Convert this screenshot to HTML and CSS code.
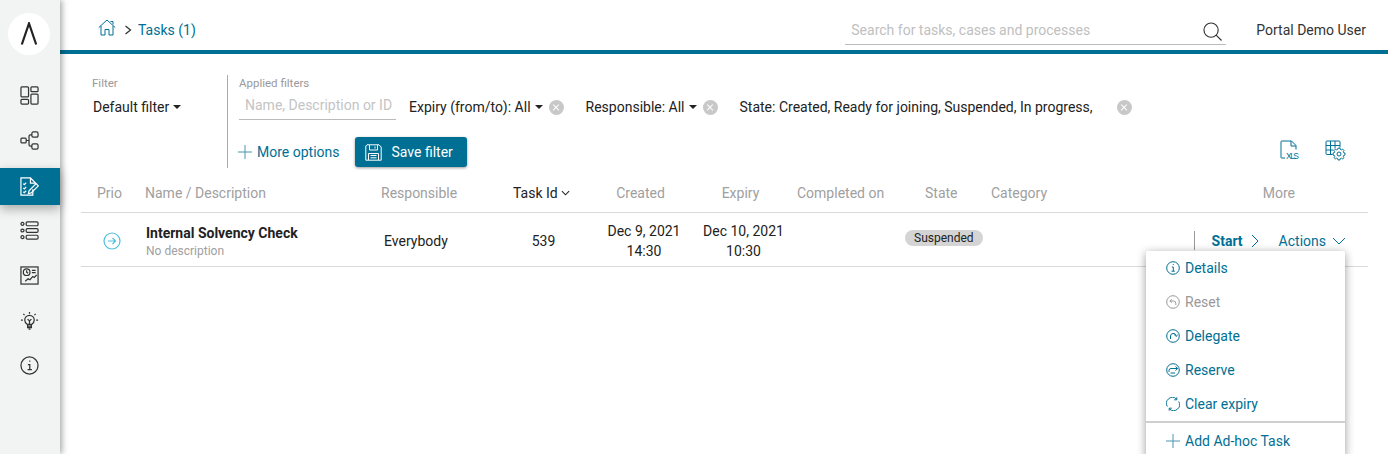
FILE: index.html
```html
<!DOCTYPE html>
<html lang="en">
<head>
<meta charset="utf-8">
<title>Tasks</title>
<link rel="stylesheet" href="styles.css">
</head>
<body>
<div class="app">
  <nav class="sidebar">
    <div class="logo"><svg width="20" height="24" viewBox="0 0 20 24"><path d="M2.800 22.500 10 1.500 17.200 22.500" fill="none" stroke="#222" stroke-width="2.200"/></svg></div>
    <a class="nav-item first"><svg class="nav-icon" viewBox="0 0 20 20"><rect x="1" y="1" width="8" height="10.500" rx="1"/><rect x="1" y="14" width="8" height="5" rx="1"/><rect x="11.500" y="1" width="7.500" height="5" rx="1"/><rect x="11.500" y="8.500" width="7.500" height="10.500" rx="1"/></svg></a>
    <a class="nav-item"><svg class="nav-icon" viewBox="0 0 20 20"><rect x="1" y="7.500" width="5.500" height="5" rx="1"/><rect x="12.500" y="1" width="6.500" height="5.500" rx="1.500"/><rect x="12.500" y="13.500" width="6.500" height="5.500" rx="1.500"/><path d="M6.500 10H9.500M12.500 4H11Q9.500 4 9.500 5.500V14.500Q9.500 16 11 16H12.500"/></svg></a>
    <a class="nav-item active"><svg class="nav-icon" viewBox="0 0 20 20"><path d="M13.500 13v6H1V1H11L16.500 6.500V8M11 1V6.500H16.500"/><path d="M3.500 7l1 1 2-2M3.500 11.500l1 1 2-2M3.500 15.500l1 1 2-2M9.500 14.500l-.7 3 3-.7 7.500-7.500-2.300-2.300Z"/></svg></a>
    <a class="nav-item"><svg class="nav-icon" viewBox="0 0 20 20"><rect x="1" y="1.500" width="3.200" height="3" rx="1.500"/><rect x="1" y="8.500" width="3.200" height="3" rx="1.500"/><rect x="1" y="15.500" width="3.200" height="3" rx="1.500"/><rect x="6.500" y="1" width="12.500" height="4" rx="1.200"/><rect x="6.500" y="8" width="12.500" height="4" rx="1.200"/><rect x="6.500" y="15" width="12.500" height="4" rx="1.200"/></svg></a>
    <a class="nav-item"><svg class="nav-icon" viewBox="0 0 20 20"><rect x="1" y="1" width="18" height="18"/><circle cx="7" cy="6.500" r="3.500"/><path d="M7 4.500v2l1.500 1M12.500 4.500h4M12.500 7h4M5.500 16l3-2.500 2 1 3-3.500 1.500 1 2.500-2.500"/></svg></a>
    <a class="nav-item"><svg class="nav-icon" viewBox="0 0 20 20"><path d="M7.500 14C6 13 5 11.300 5 9.500a5 5 0 0 1 10 0c0 1.800-1 3.500-2.500 4.500Z"/><path d="M8 14v3.500h4V14M8.500 16h3M8 8.500l2 2 2-2M10 10.500v3.500M10 1v2M3.500 3l1.300 1.300M16.500 3l-1.300 1.300M1 9.500h2M17 9.500h2M9 19h2"/></svg></a>
    <a class="nav-item"><svg class="nav-icon" viewBox="0 0 20 20"><circle cx="10" cy="10" r="9"/><path d="M8.300 9h2v5M8 14.300h4.500M9.700 5.500h1.200"/></svg></a>
  </nav>

  <main class="main">
    <header class="topbar">
      <div class="crumbs">
        <svg class="home" viewBox="0 0 18 18"><path d="M.8 8.500 9 1l8.200 7.500M3 7V16H7V10.500H11V16H15V7M12.500 2.500 15 2.500V5.500"/></svg>
        <svg class="crumb-sep" viewBox="0 0 8 10"><path d="M1.500 1 6.500 5 1.500 9"/></svg>
        <a class="crumb-link">Tasks (1)</a>
      </div>
      <div class="top-right">
        <div class="search">
          <span class="search-text">Search for tasks, cases and processes</span>
          <svg class="search-icon" viewBox="0 0 20 20"><circle cx="8.500" cy="8.500" r="7.500"/><path d="M13.800 13.800 19.500 19.500"/></svg>
        </div>
        <span class="user">Portal Demo User</span>
      </div>
    </header>

    <section class="filters">
      <div class="filter-col">
        <div class="label">Filter</div>
        <div class="drop default-filter">Default filter<i class="caret"></i></div>
      </div>
      <div class="applied">
        <div class="label">Applied filters</div>
        <div class="applied-row">
          <div class="name-input">Name, Description or ID</div>
          <div class="drop expiry">Expiry (from/to): All<i class="caret"></i></div>
          <i class="clear"></i>
          <div class="drop resp">Responsible: All<i class="caret"></i></div>
          <i class="clear"></i>
          <div class="drop state-filter">State: Created, Ready for joining, Suspended, In progress,</div>
          <i class="clear"></i>
        </div>
        <div class="applied-actions">
          <a class="more-options"><svg class="plus" viewBox="0 0 14 14"><path d="M7 0V14M0 7H14"/></svg>More options</a>
          <button class="save"><svg class="save-icon" viewBox="0 0 17 17"><path d="M.8 2 2 .8H14L16.200 3V16.200H.8ZM4.500 1V6H12.500V1M10 2.500V4.500M3.500 16V9.500H13.500V16M5.500 11.500H11.500M5.500 13.800H11.500"/></svg>Save filter</button>
        </div>
      </div>
      <div class="tools">
        <svg class="tool" viewBox="0 0 20 20"><path d="M5 18H1.500Q1 18 1 17.500V1.500Q1 1 1.500 1H11.500L16 5.500V9.500M11 1V6H16"/><text x="6" y="18.500" class="xls" textLength="13">XLS</text></svg>
        <svg class="tool" viewBox="0 0 20 20"><path d="M7.500 14.500H2Q1 14.500 1 13.500V2Q1 1 2 1H14Q15 1 15 2V7.500M1 5.500H15M1 10H8.500M5.500 1V14.500M10 1V8.500"/><circle cx="14" cy="14" r="2"/><path d="M13.500 9.500h2l.3 1.300 1.200.5 1.200-.7 1.300 1.400-.7 1.100.5 1.200 1.200.3v1.800l-1.200.3-.5 1.200.7 1.100-1.300 1.300-1.200-.7-1.200.5-.3 1.300h-2l-.3-1.300-1.200-.5-1.100.7-1.400-1.300.7-1.100-.5-1.200-1.200-.3v-1.800l1.200-.3.5-1.200-.7-1.100 1.400-1.400 1.100.7 1.200-.5Z" transform="translate(-.5 -1.450)"/></svg>
      </div>
    </section>

    <section class="table">
      <div class="thead">
        <span class="th th-prio">Prio</span>
        <span class="th">Name / Description</span>
        <span class="th">Responsible</span>
        <span class="th th-sort">Task Id<svg class="sort" viewBox="0 0 10 6"><path d="M1 1 5 5 9 1"/></svg></span>
        <span class="th th-created">Created</span>
        <span class="th th-expiry">Expiry</span>
        <span class="th">Completed on</span>
        <span class="th th-state">State</span>
        <span class="th">Category</span>
        <span class="th th-more">More</span>
      </div>
      <div class="trow">
        <span class="td-prio"><svg class="prio" viewBox="0 0 18 18"><circle cx="9" cy="9" r="8"/><path d="M5 9H12.500M9.500 6 12.500 9 9.500 12"/></svg></span>
        <span class="td-name"><b class="task-name">Internal Solvency Check</b><small class="task-desc">No description</small></span>
        <span class="td-resp">Everybody</span>
        <span class="td-id">539</span>
        <span class="td-date">Dec 9, 2021<br>14:30</span>
        <span class="td-date">Dec 10, 2021<br>10:30</span>
        <span></span>
        <span class="td-state"><em class="badge">Suspended</em></span>
        <span></span>
        <span class="td-actions">
          <a class="start">Start<svg class="chev-r" viewBox="0 0 8 14"><path d="M1 1 7 7 1 13"/></svg></a>
          <a class="actions">Actions<svg class="chev-d" viewBox="0 0 14 8"><path d="M1 1 7 7 13 1"/></svg></a>
        </span>
      </div>
    </section>

    <ul class="menu">
      <li class="menu-item"><svg class="mi" viewBox="0 0 14 14"><circle cx="7" cy="7" r="6.300"/><path d="M5.800 6H7.300V10M5.500 10.200H8.800M6.800 3.400H7.800"/></svg>Details</li>
      <li class="menu-item off"><svg class="mi" viewBox="0 0 14 14"><circle cx="7" cy="7" r="6.300"/><path d="M5.800 4.300 3.800 6 5.800 7.700M4 6H7.500A2.300 2.300 0 0 1 9.800 8.300V10"/></svg>Reset</li>
      <li class="menu-item"><svg class="mi" viewBox="0 0 14 14"><circle cx="7" cy="7" r="6.300"/><path d="M4.500 10V7A2.800 2.800 0 0 1 10 6.500M8.300 5.500 10 7.500 11.800 5.800"/></svg>Delegate</li>
      <li class="menu-item"><svg class="mi" viewBox="0 0 14 14"><circle cx="7" cy="7" r="6.300"/><path d="M3 9V7.500Q3 5.500 5 5.500H11.500M9.500 3.500 11.700 5.500 9.500 7.500M4.500 10H9"/></svg>Reserve</li>
      <li class="menu-item"><svg class="mi" viewBox="0 0 14 14"><path d="M1.300 9.500A6 6 0 0 1 10.500 2M12.700 4.500A6 6 0 0 1 3.500 12M10.800 .3V2.800H8.200M3.200 13.700V11.200H5.800"/></svg>Clear expiry</li>
      <li class="menu-item add"><svg class="mi-plus" viewBox="0 0 14 14"><path d="M7 0V14M0 7H14"/></svg>Add Ad-hoc Task</li>
    </ul>
  </main>
</div>
</body>
</html>
```
FILE: styles.css
```css
* { box-sizing: border-box; }
html, body { margin: 0; height: 100%; overflow: hidden; }
body { font-family: Roboto, "Liberation Sans", sans-serif; font-size: 14px; color: #222; background: #fff; }
svg { fill: none; stroke-width: 1; flex: none; display: block; }

.app { display: flex; height: 454px; }

/* Sidebar */
.sidebar { width: 60px; flex: none; background: #f2f4f4; box-shadow: 2px 0 6px rgba(0,0,0,.35); display: flex; flex-direction: column; align-items: stretch; position: relative; z-index: 2; padding-top: 13px; }
.logo { width: 42px; height: 42px; border-radius: 50%; background: #fff; margin: 0 0 0 8px; display: flex; align-items: center; justify-content: center; }
.nav-item { height: 37px; display: flex; align-items: center; justify-content: center; margin-bottom: 8px; }
.nav-item.first { margin-top: 22px; }
.nav-icon { width: 19px; height: 19px; stroke: #333; stroke-width: 1.300; margin-left: -2px; }
.nav-item.active { background: #006f94; box-shadow: 0 4px 10px rgba(0,0,0,.3); margin-top: 1px; margin-bottom: 7px; }
.nav-item.active .nav-icon { stroke: #fff; }

/* Top bar */
.main { flex: 1; min-width: 0; position: relative; }
.topbar { height: 54px; border-bottom: 4px solid #006f94; display: flex; justify-content: space-between; align-items: center; padding: 10px 22px 0 38px; }
.crumbs { display: flex; align-items: center; }
.home { width: 18px; height: 18px; stroke: #006f94; margin-top: -4px; }
.crumb-sep { width: 8px; height: 10px; stroke: #333; stroke-width: 1.300; margin: 0 6px 0 8px; }
.crumb-link { color: #006f94; font-size: 14px; }
.top-right { display: flex; align-items: center; }
.search { width: 381px; height: 30px; border-bottom: 1px solid #bbb; display: flex; align-items: center; justify-content: space-between; padding: 0 4px 0 6px; }
.search-text { color: #c0c0c0; font-size: 14px; }
.search-icon { width: 19px; height: 19px; stroke: #333; stroke-width: 1.200; margin-top: 4px; }
.user { margin-left: 30px; color: #333; font-size: 14px; }

/* Filters */
.filters { display: flex; height: 126px; padding: 21px 24px 0 32px; position: relative; }
.filter-col { width: 135px; flex: none; }
.label { font-size: 11.500px; color: #999; line-height: 16px; }
.drop { font-size: 14px; color: #222; white-space: nowrap; display: flex; align-items: center; }
.default-filter { margin-top: 7px; margin-left: 1px; line-height: 18px; }
.caret { width: 0; height: 0; border: 4px solid transparent; border-top-color: #222; border-bottom: 0; margin-left: 4px; }
.applied { flex: 1; border-left: 1px solid #aaa; padding-left: 11px; height: 93px; }
.applied-row { display: flex; align-items: center; margin-top: 3px; height: 26px; }
.name-input { width: 157px; height: 26px; border-bottom: 1px solid #bbb; color: #c4c4c4; font-size: 14px; line-height: 22px; padding-left: 6px; white-space: nowrap; flex: none; }
.expiry { margin-left: 13px; }
.resp { margin-left: 22px; }
.state-filter { margin-left: 22px; width: 371px; flex: none; }
.clear { width: 15px; height: 15px; border-radius: 50%; background: #c8c8c8; margin-left: 6px; flex: none; position: relative; }
.clear::before, .clear::after { content: ""; position: absolute; left: 3.500px; top: 7px; width: 8px; height: 1.300px; background: #fff; transform: rotate(45deg); }
.clear::after { transform: rotate(-45deg); }
.applied-actions { display: flex; align-items: center; margin-top: 17px; margin-left: -1px; }
.more-options { display: flex; align-items: center; color: #006f94; font-size: 14px; white-space: nowrap; }
.plus { width: 14px; height: 14px; stroke: #4b96b0; margin-right: 5px; }
.save { margin-left: 15px; width: 112px; height: 30px; background: #006f94; color: #fff; border: 0; border-radius: 3px; box-shadow: 0 1px 3px rgba(0,0,0,.4); font: 14px Roboto, sans-serif; display: flex; align-items: center; padding: 0 0 0 10px; }
.save-icon { width: 17px; height: 17px; stroke: #fff; margin-right: 10px; }
.tools { position: absolute; right: 43px; top: 86px; display: flex; gap: 25px; }
.tool { width: 20px; height: 20px; stroke: #006f94; overflow: visible; }
.xls { font: 8.500px "Liberation Sans", sans-serif; fill: #006f94; stroke: none; }

/* Table */
.table { margin: 0 20px 0 21px; }
.thead, .trow { display: grid; grid-template-columns: 64px 236px 119px 95px 104px 98px 111px 83px 182px 1fr; align-items: center; }
.thead { height: 33px; border-bottom: 1px solid #d9d9d9; }
.th { color: #a0a0a0; font-size: 14px; white-space: nowrap; padding-bottom: 6px; }
.th-prio { padding-left: 16px; }
.th-sort { color: #222; display: flex; align-items: center; padding-left: 13px; }
.sort { width: 9px; height: 6px; stroke: #222; stroke-width: 1.200; margin-left: 3px; }
.th-created { text-align: center; padding-right: 13px; }
.th-expiry { text-align: center; padding-right: 15px; }
.th-state { padding-left: 17px; }
.th-more { text-align: right; padding-right: 73px; margin-left: -130px; }
.trow { height: 54px; padding-top: 2px; border-bottom: 1px solid #d9d9d9; }
.td-prio { padding-left: 22px; }
.prio { width: 18px; height: 18px; stroke: #4fbfdf; stroke-width: 1.200; }
.td-name { display: flex; flex-direction: column; gap: 1px; padding-left: 1px; margin-top: 2px; }
.task-name { font-size: 14px; font-weight: 700; color: #222; line-height: 18px; }
.task-desc { font-size: 12px; color: #a0a0a0; line-height: 16px; }
.td-resp { padding-left: 3px; }
.td-id { text-align: center; padding-right: 8px; }
.td-date { text-align: center; line-height: 20px; white-space: nowrap; padding-right: 6px; }
.td-date + .td-date { padding-right: 9px; }
.badge { display: inline-block; font-style: normal; font-size: 12px; line-height: 16px; padding: 0 9px; border-radius: 8px; background: #d4d4d4; color: #222; }
.td-state { margin-left: -3px; margin-top: -6px; white-space: nowrap; }
.td-actions { display: flex; align-items: center; justify-content: flex-end; height: 19px; margin-left: -130px; padding-right: 22px; }
.start { display: flex; align-items: center; color: #006f94; font-weight: 700; border-left: 1px solid #999; padding-left: 17px; height: 19px; }
.chev-r { width: 8px; height: 14px; stroke: #006f94; margin-left: 8px; }
.actions { display: flex; align-items: center; color: #006f94; margin-left: 20px; }
.chev-d { width: 14px; height: 8px; stroke: #006f94; margin-left: 6px; }

/* Menu overlay */
.menu { position: absolute; left: 1086px; top: 251px; width: 199px; margin: 0; padding: 0; list-style: none; background: #fff; border-radius: 2px; box-shadow: 0 2px 10px rgba(0,0,0,.4); z-index: 3; }
.menu-item { height: 34px; display: flex; align-items: center; padding-left: 20px; color: #006f94; font-size: 14px; }
.menu-item.off { color: #999; }
.mi { width: 14px; height: 14px; stroke: #006f94; margin-right: 5px; }
.off .mi { stroke: #999; }
.mi-plus { width: 14px; height: 14px; stroke: #4b96b0; margin-right: 5px; }
.add { border-top: 2px solid #cfcfcf; height: 38px; }
```
